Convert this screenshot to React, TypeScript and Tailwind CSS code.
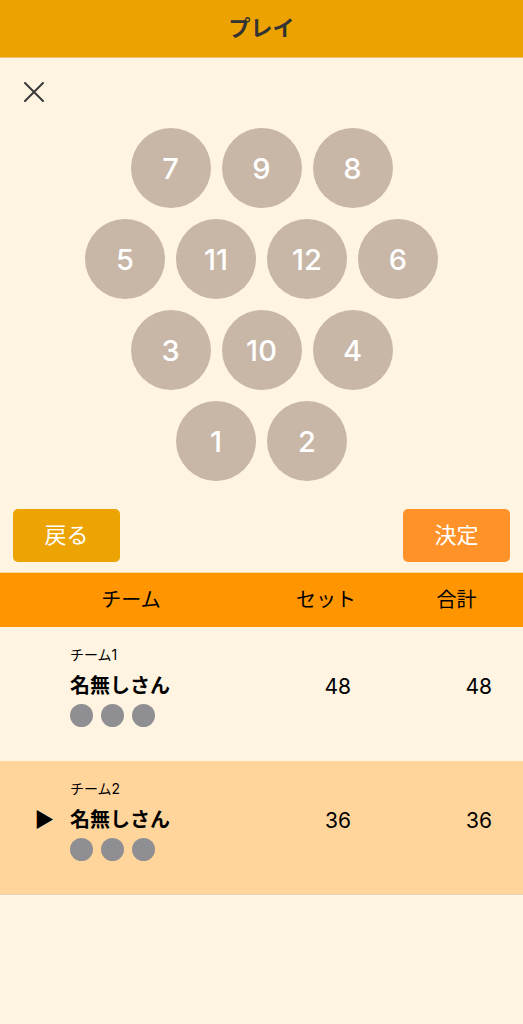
const font = { fontFamily: 'Inter, "Noto Sans CJK JP", sans-serif' }

const pinRows = [
  [7, 9, 8],
  [5, 11, 12, 6],
  [3, 10, 4],
  [1, 2],
]

const teams = [
  { label: "チーム1", name: "名無しさん", set: 48, total: 48, active: false },
  { label: "チーム2", name: "名無しさん", set: 36, total: 36, active: true },
]

function Pin({ n }: { n: number }) {
  return (
    <div className="w-[80px] h-[80px] rounded-full bg-[#c8b6a7] flex items-center justify-center">
      <span className="text-white text-[29px] font-medium leading-none">{n}</span>
    </div>
  )
}

export default function App() {
  return (
    <div className="w-[523px] min-h-[1024px] bg-[#fff4e1] text-black" style={font}>
      {/* Header */}
      <div className="h-[58px] bg-[#eca302] border-b border-[#f0c36a] flex items-center justify-center">
        <span className="text-[22px] font-bold text-[#333333]">プレイ</span>
      </div>

      {/* Close */}
      <div className="pl-[24px] pt-[24px]">
        <svg width="20" height="20" viewBox="0 0 20 20" fill="none" stroke="#3a3a3a" strokeWidth="2" strokeLinecap="round">
          <path d="M1 1 L19 19 M19 1 L1 19" />
        </svg>
      </div>

      {/* Pins */}
      <div className="mt-[26px] flex flex-col items-center gap-[11px]">
        {pinRows.map((row, i) => (
          <div key={i} className="flex gap-[11px]">
            {row.map((n) => (
              <Pin key={n} n={n} />
            ))}
          </div>
        ))}
      </div>

      {/* Buttons */}
      <div className="mt-[28px] px-[13px] flex justify-between">
        <button className="w-[107px] h-[53px] rounded-[5px] bg-[#eca304] text-white text-[22px]">戻る</button>
        <button className="w-[107px] h-[53px] rounded-[5px] bg-[#ff9329] text-white text-[22px]">決定</button>
      </div>

      {/* Table header */}
      <div className="mt-[10px] border-t border-[#f3d9a8] h-[55px] bg-[#ff9500] flex items-center text-[20px]">
        <div className="w-[262px] text-center">チーム</div>
        <div className="w-[128px] text-center">セット</div>
        <div className="w-[133px] text-center">合計</div>
      </div>

      {/* Rows */}
      {teams.map((t) => (
        <div
          key={t.label}
          className={`h-[134px] flex items-center ${t.active ? "bg-[#ffd59c] border-b border-[#e6d2b8]" : "bg-[#fff4e1]"}`}
        >
          <div className="w-[70px] flex justify-end pr-[16px] self-stretch items-center">
            {t.active && <span className="text-[21px] leading-none mb-[16px]">▶</span>}
          </div>
          <div className="w-[192px] flex flex-col mb-[15px]">
            <span className="text-[14px] leading-[18px]">{t.label}</span>
            <span className="text-[20px] font-bold leading-[28px] mt-[8px]">{t.name}</span>
            <div className="flex gap-[8px] mt-[4px]">
              <div className="w-[23px] h-[23px] rounded-full bg-[#8e8e93]" />
              <div className="w-[23px] h-[23px] rounded-full bg-[#8e8e93]" />
              <div className="w-[23px] h-[23px] rounded-full bg-[#8e8e93]" />
            </div>
          </div>
          <div className="w-[128px] text-right pr-[39px] text-[21px] mb-[14px]">{t.set}</div>
          <div className="w-[133px] text-right pr-[31px] text-[21px] mb-[14px]">{t.total}</div>
        </div>
      ))}
    </div>
  )
}
